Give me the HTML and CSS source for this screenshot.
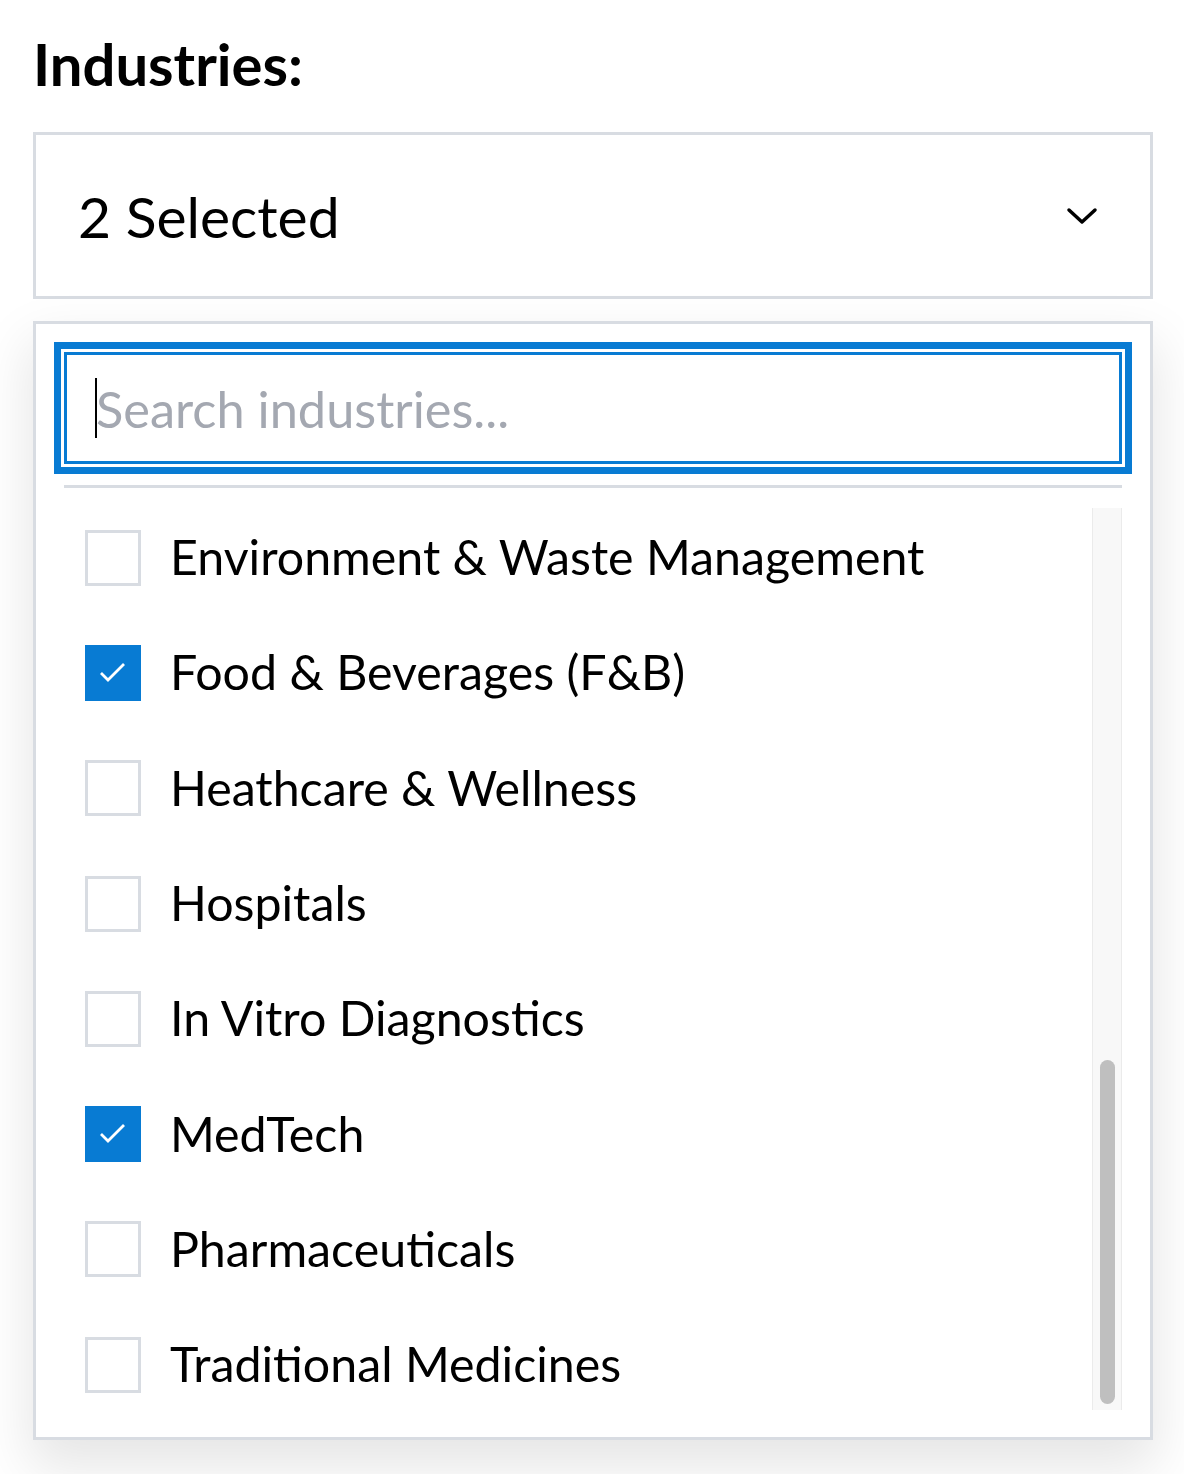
FILE: index.html
```html
<!DOCTYPE html>
<html lang="en">
<head>
    <meta charset="UTF-8">
    <meta name="viewport" content="width=device-width, initial-scale=1.0">
    <title>Industries</title>
    <link rel="stylesheet" href="styles.css">
</head>
<body>
    <div class="field">
        <label class="field-label" for="industry-search">Industries:</label>

        <!-- 触发按钮 -->
        <button class="select-trigger" type="button">
            <span>2 Selected</span>
            <svg class="chevron" width="32" height="20" viewBox="0 0 32 20">
                <polyline points="3,4 16,16 29,4" fill="none" stroke="#000" stroke-width="3.5" stroke-linecap="round" stroke-linejoin="round"/>
            </svg>
        </button>

        <!-- 下拉面板 -->
        <div class="select-panel">
            <div class="search-wrap">
                <input class="search" id="industry-search" type="text" placeholder="Search industries...">
                <span class="caret"></span>
            </div>
            <div class="divider"></div>

            <div class="list-wrap">
                <ul class="options">
                    <li class="option">
                        <span class="box"></span>
                        <span class="option-text">Environment &amp; Waste Management</span>
                    </li>
                    <li class="option checked">
                        <span class="box">
                            <svg width="28" height="20" viewBox="0 0 28 20"><polyline points="2,10 9,17 25,1" fill="none" stroke="#fff" stroke-width="2.8"/></svg>
                        </span>
                        <span class="option-text">Food &amp; Beverages (F&amp;B)</span>
                    </li>
                    <li class="option">
                        <span class="box"></span>
                        <span class="option-text">Heathcare &amp; Wellness</span>
                    </li>
                    <li class="option">
                        <span class="box"></span>
                        <span class="option-text">Hospitals</span>
                    </li>
                    <li class="option">
                        <span class="box"></span>
                        <span class="option-text">In Vitro Diagnostics</span>
                    </li>
                    <li class="option checked">
                        <span class="box">
                            <svg width="28" height="20" viewBox="0 0 28 20"><polyline points="2,10 9,17 25,1" fill="none" stroke="#fff" stroke-width="2.8"/></svg>
                        </span>
                        <span class="option-text">MedTech</span>
                    </li>
                    <li class="option">
                        <span class="box"></span>
                        <span class="option-text">Pharmaceuticals</span>
                    </li>
                    <li class="option">
                        <span class="box"></span>
                        <span class="option-text">Traditional Medicines</span>
                    </li>
                </ul>

                <!-- 滚动条 -->
                <div class="scroll-track">
                    <div class="scroll-thumb"></div>
                </div>
            </div>
        </div>
    </div>
</body>
</html>
```

FILE: styles.css
```css
body {
    margin: 0;
    min-height: 100vh;
    background: #ffffff;
    font-family: Lato, 'Noto Sans', Arial, sans-serif;
    color: #000000;
}

.field {
    display: flex;
    flex-direction: column;
    padding: 0 31px 34px 33px;
}

.field-label {
    display: block;
    font-size: 58px;
    font-weight: 700;
    line-height: 68px;
    margin: 30px 0 34px 0;
}

/* 触发按钮 */
.select-trigger {
    display: flex;
    align-items: center;
    justify-content: space-between;
    height: 167px;
    padding: 0 52px 0 42px;
    border: 3px solid #d8dce2;
    background: transparent;
    font-family: inherit;
    font-size: 57px;
    color: #000000;
    text-align: left;
    cursor: pointer;
}

.chevron {
    display: block;
}

/* 下拉面板 */
.select-panel {
    margin-top: 22px;
    padding: 28px 28px 27px 28px;
    border: 3px solid #d8dce2;
    background: #ffffff;
    box-shadow: 0 24px 50px 4px rgba(0, 0, 0, 0.1);
}

.search-wrap {
    position: relative;
}

.search {
    display: block;
    box-sizing: border-box;
    width: 100%;
    height: 112px;
    padding: 0 29px;
    border: 3px solid #087bd3;
    outline: 7px solid #087bd3;
    outline-offset: 3px;
    font-family: inherit;
    font-size: 50.5px;
    color: #000000;
}

.search::placeholder {
    color: #a4a8b1;
}

/* 光标 */
.caret {
    position: absolute;
    left: 31px;
    top: 26px;
    width: 2px;
    height: 60px;
    background: #000000;
}

.divider {
    height: 3px;
    margin-top: 21px;
    background: #d8dce2;
}

.list-wrap {
    display: flex;
    height: 902px;
    margin-top: 20px;
}

.options {
    flex: 1;
    list-style: none;
    margin: 0;
    padding: 0 0 0 21px;
    overflow: hidden;
}

.option {
    display: flex;
    align-items: center;
    height: 115.3px;
    font-size: 48.3px;
}

.option:first-child {
    margin-top: -8px;
}

.box {
    display: flex;
    align-items: center;
    justify-content: center;
    box-sizing: border-box;
    width: 56px;
    height: 56px;
    flex-shrink: 0;
    border: 3px solid #d8dce2;
    background: #ffffff;
}

.option.checked .box {
    border-color: #087bd3;
    background: #087bd3;
}

.option-text {
    margin-left: 29px;
    margin-top: -3px;
    white-space: nowrap;
}

.scroll-track {
    box-sizing: border-box;
    width: 30px;
    padding: 0 6px 0 7px;
    background: #f8f8f8;
    border-left: 1px solid #ebebeb;
    border-right: 1px solid #ebebeb;
}

.scroll-thumb {
    height: 344px;
    margin-top: 552px;
    border-radius: 8px;
    background: #bfbfbf;
}
```
